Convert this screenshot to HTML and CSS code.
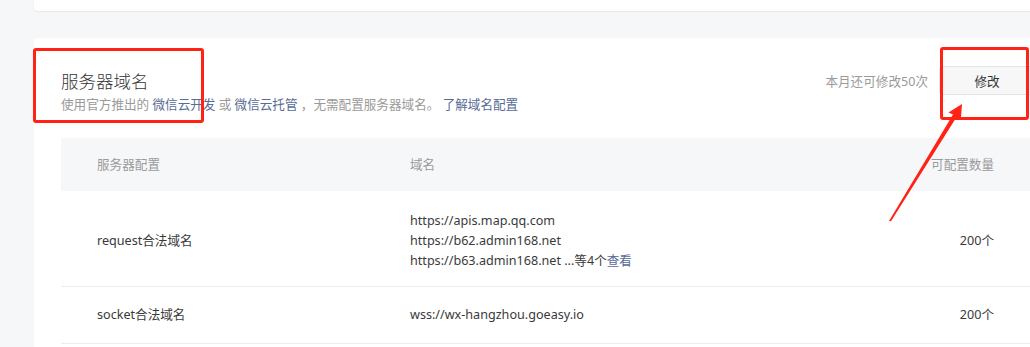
FILE: index.html
```html
<!DOCTYPE html>
<html lang="zh-CN">
<head>
    <meta charset="UTF-8">
    <meta name="viewport" content="width=device-width, initial-scale=1.0">
    <title>服务器域名</title>
    <link rel="stylesheet" href="styles.css">
</head>
<body>
    <div class="page">
        <div class="card card-top"></div>

        <div class="card section">
            <div class="section-head">
                <div class="head-main">
                    <h2 class="title">服务器域名</h2>
                    <p class="desc">使用官方推出的 <a href="#">微信云开发</a> 或 <a href="#">微信云托管</a> ，无需配置服务器域名。 <a href="#">了解域名配置</a></p>
                </div>
                <div class="head-extra">
                    <span class="quota">本月还可修改50次</span>
                    <button class="btn">修改</button>
                </div>
            </div>

            <div class="table">
                <div class="row row-head">
                    <div class="cell">服务器配置</div>
                    <div class="cell">域名</div>
                    <div class="cell cell-num">可配置数量</div>
                </div>
                <div class="row row-multi">
                    <div class="cell">request合法域名</div>
                    <div class="cell">
                        <div>https://apis.map.qq.com</div>
                        <div>https://b62.admin168.net</div>
                        <div>https://b63.admin168.net ...等4个<a href="#">查看</a></div>
                    </div>
                    <div class="cell cell-num">200个</div>
                </div>
                <div class="row">
                    <div class="cell">socket合法域名</div>
                    <div class="cell">wss://wx-hangzhou.goeasy.io</div>
                    <div class="cell cell-num">200个</div>
                </div>
            </div>
        </div>

        <!-- 标注 -->
        <div class="mark mark-title"></div>
        <div class="mark mark-btn"></div>
        <svg class="arrow" width="1030" height="347" viewBox="0 0 1030 347">
            <polygon points="962,104 948.5,112.5 953,114.6 889,221 891,221.3 956.6,117 960.8,119.8" fill="#ff2215"/>
        </svg>
    </div>
</body>
</html>
```

FILE: styles.css
```css
body {
    margin: 0;
    background-color: #f6f7f9;
    font-family: "Noto Sans", "Noto Sans CJK SC", sans-serif;
    font-size: 12.6px;
    color: #3a3a3a;
    overflow: hidden;
}
.page {
    position: relative;
    width: 1030px;
    height: 347px;
    padding-left: 34px;
    box-sizing: border-box;
}
.card {
    background-color: #fff;
    border-radius: 4px;
    width: 1028px;
}
.card-top {
    height: 11px;
    border-radius: 0 0 4px 4px;
    box-shadow: 0 1px 2px rgba(0, 0, 0, 0.07);
}
.section {
    margin-top: 27px;
    padding: 31px 27px 0;
    box-sizing: border-box;
    height: 320px;
}
.section-head {
    display: flex;
    justify-content: space-between;
    align-items: flex-start;
}
.title {
    margin: 0;
    font-size: 17.5px;
    font-weight: 300;
    line-height: 24px;
    color: #353535;
}
.desc {
    margin: 2px 0 0;
    line-height: 20px;
    color: #9a9a9a;
}
a {
    color: #576b95;
    text-decoration: none;
}
.head-extra {
    display: flex;
    align-items: center;
    gap: 11px;
    margin-top: -3px;
}
.quota {
    color: #9a9a9a;
}
.btn {
    width: 96px;
    height: 29px;
    padding: 0;
    border: 1px solid #e4e4e4;
    border-radius: 3px;
    background-color: #f7f7f7;
    color: #353535;
    font-family: inherit;
    font-size: 12.6px;
}
.table {
    margin-top: 23px;
}
.row {
    display: grid;
    grid-template-columns: 349px 1fr 160px;
    align-items: center;
    padding: 18px 0;
    line-height: 20px;
    border-bottom: 1px solid #eceded;
}
.row-head {
    background-color: #f6f7f9;
    color: #9a9a9a;
    height: 53px;
    padding: 0;
    box-sizing: border-box;
    border-bottom: none;
}
.row-multi {
    padding: 20px 0 15px;
}
.cell:first-child {
    padding-left: 36px;
}
.cell-num {
    text-align: right;
    padding-right: 41px;
}
.mark {
    position: absolute;
    border: 3px solid #ff2215;
    border-radius: 3px;
    box-sizing: border-box;
}
.mark-title {
    left: 33px;
    top: 48px;
    width: 171px;
    height: 75px;
}
.mark-btn {
    left: 940px;
    top: 47px;
    width: 89px;
    height: 73px;
}
.arrow {
    position: absolute;
    left: 0;
    top: 0;
    pointer-events: none;
}
```
